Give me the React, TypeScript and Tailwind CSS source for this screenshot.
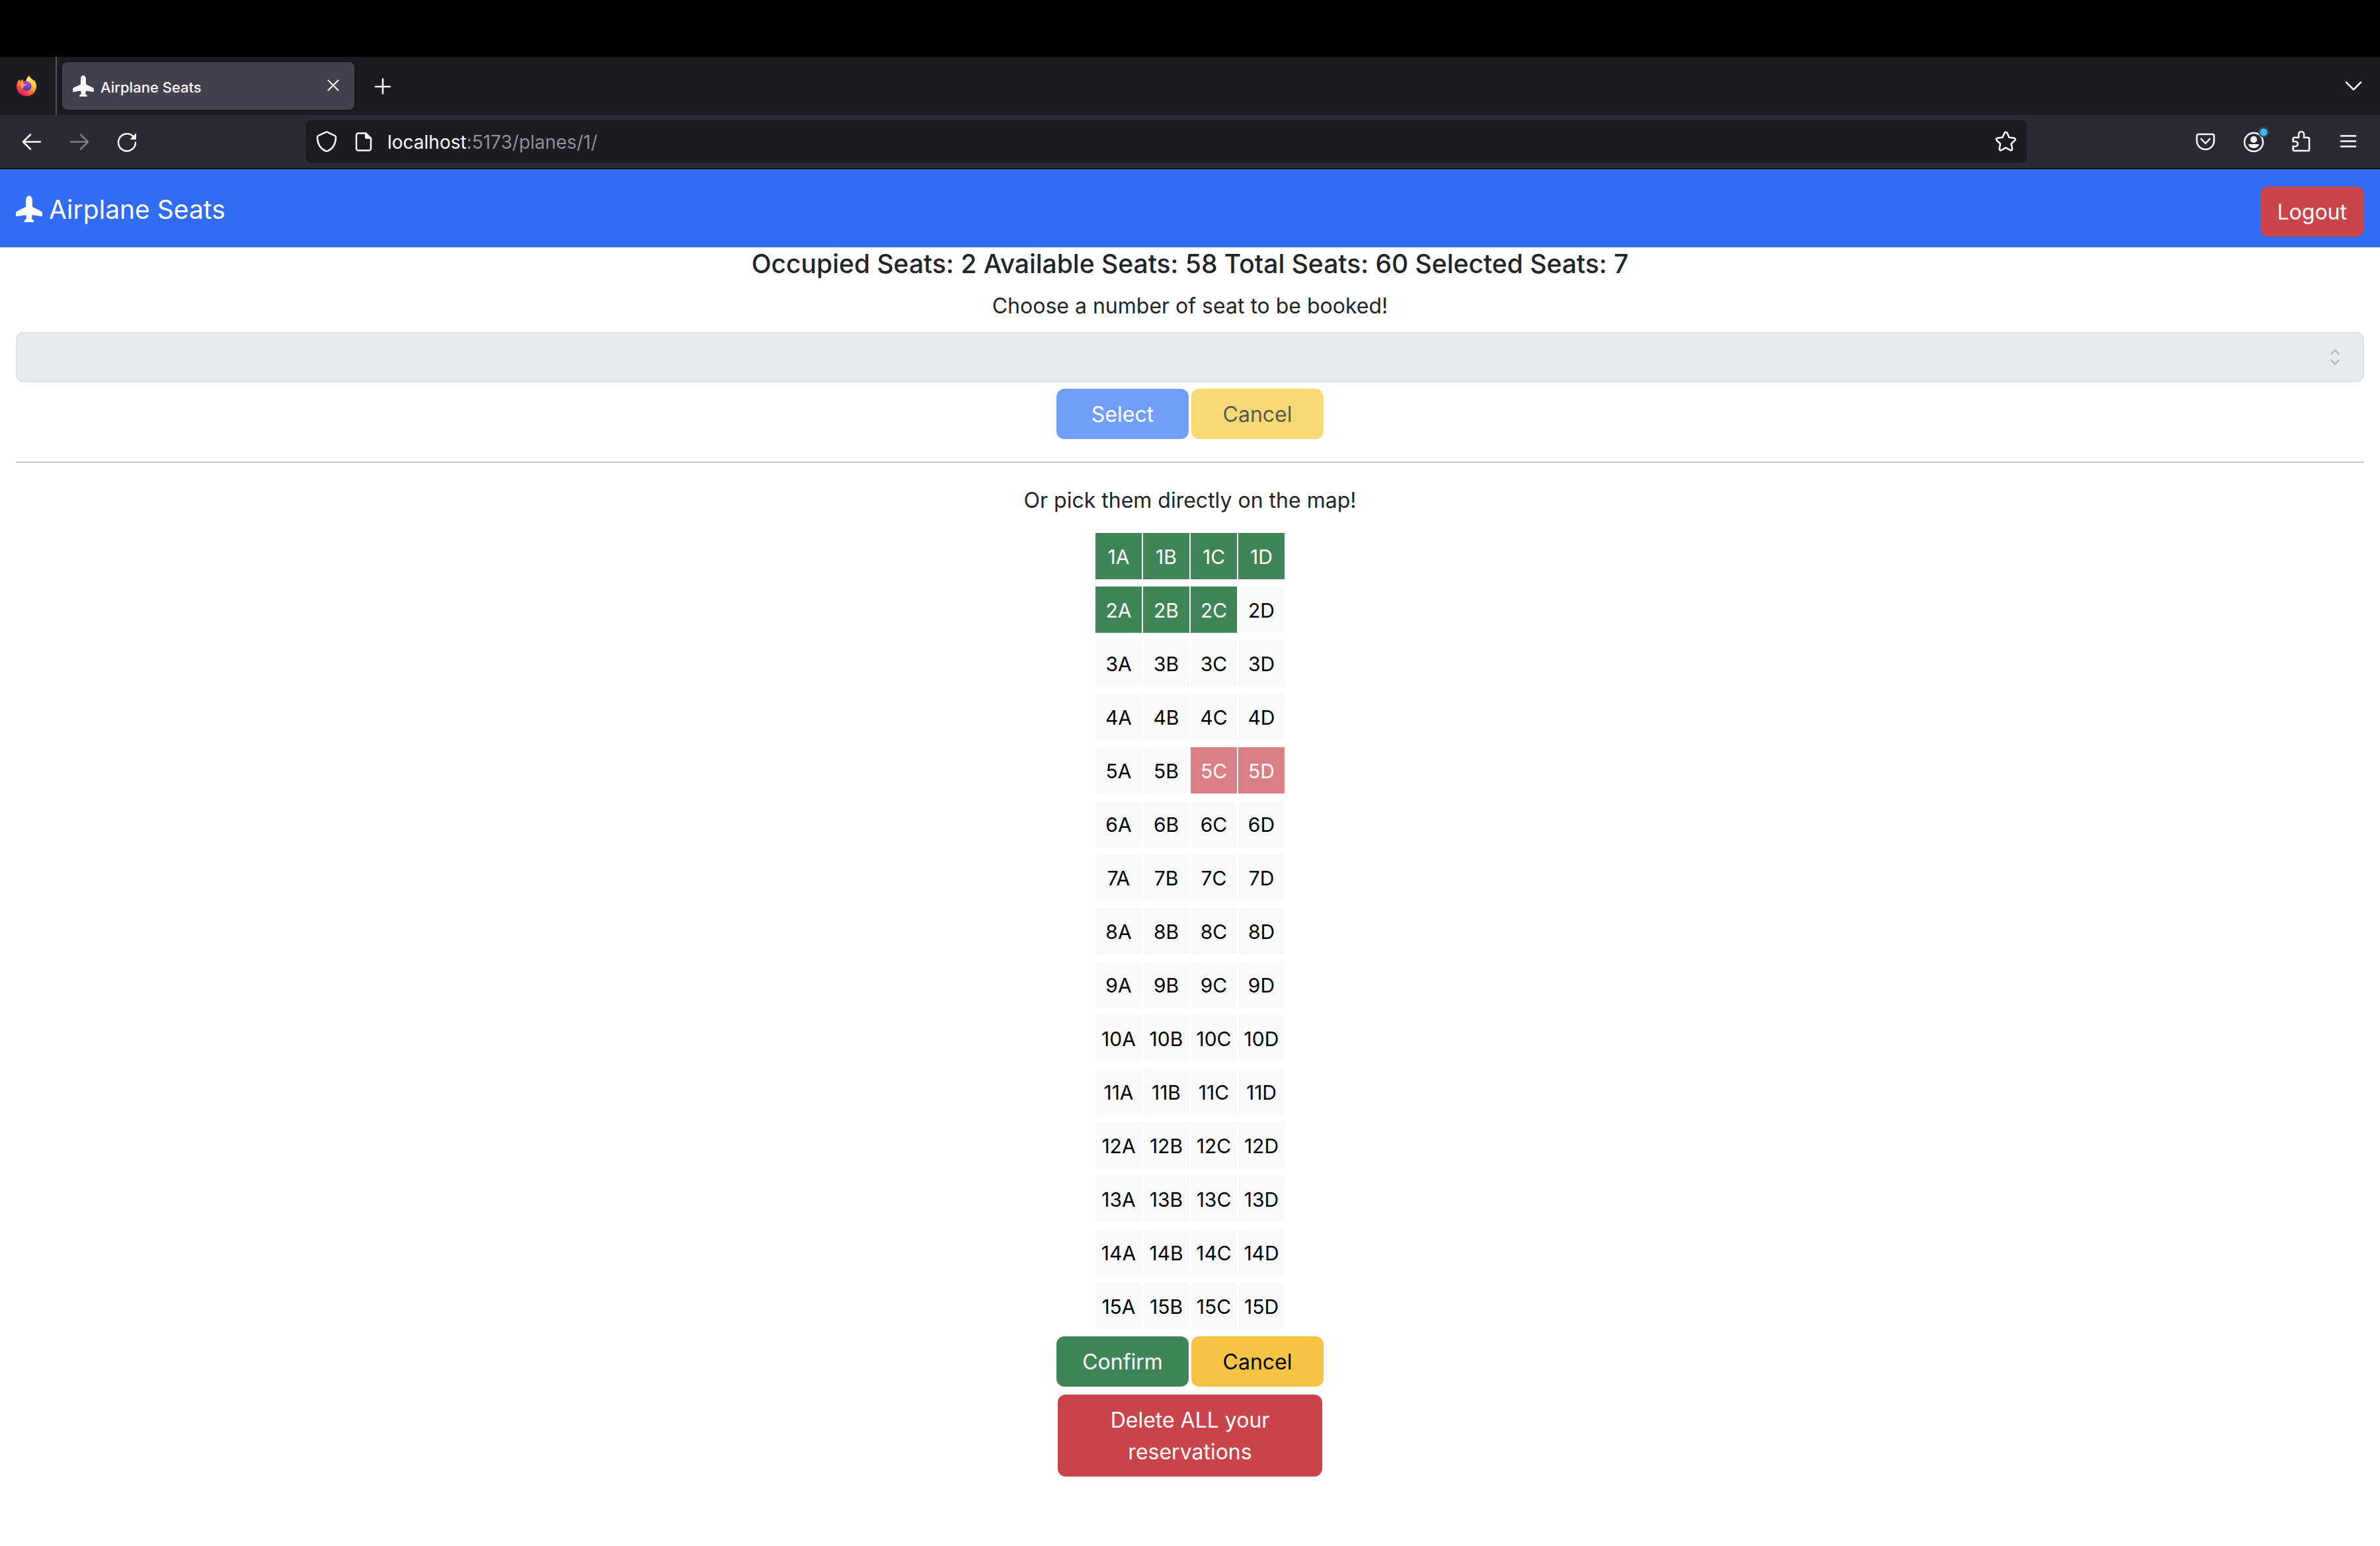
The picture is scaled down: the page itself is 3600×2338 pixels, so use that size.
import React from "react";

const columns = ["A", "B", "C", "D"];
const rows = Array.from({ length: 15 }, (_, i) => i + 1);
const selectedSeats = ["1A", "1B", "1C", "1D", "2A", "2B", "2C"];
const occupiedSeats = ["5C", "5D"];

function PlaneIcon({ className }: { className: string }) {
  return (
    <svg viewBox="0 0 16 16" fill="currentColor" className={className} aria-hidden="true">
      <path d="M6.428 1.151C6.708.591 7.213 0 8 0s1.292.592 1.572 1.151C9.861 1.73 10 2.431 10 3v3.691l5.17 2.585a1.5 1.5 0 0 1 .83 1.342V12a.5.5 0 0 1-.582.493l-5.507-.918-.375 2.253 1.318 1.318A.5.5 0 0 1 10.5 16h-5a.5.5 0 0 1-.354-.854l1.319-1.318-.376-2.253-5.507.918A.5.5 0 0 1 0 12v-1.382a1.5 1.5 0 0 1 .83-1.342L6 6.691V3c0-.568.14-1.271.428-1.849" />
    </svg>
  );
}

function FirefoxLogo() {
  return (
    <svg viewBox="0 0 32 32" className="size-8" aria-hidden="true">
      <defs>
        <linearGradient id="flame" x1="26" y1="4" x2="8" y2="30" gradientUnits="userSpaceOnUse">
          <stop offset="0" stopColor="#fff44f" />
          <stop offset="0.35" stopColor="#ffb22e" />
          <stop offset="0.62" stopColor="#ff6b36" />
          <stop offset="0.85" stopColor="#f0334f" />
          <stop offset="1" stopColor="#d01a77" />
        </linearGradient>
        <linearGradient id="crest" x1="20" y1="1" x2="26" y2="24" gradientUnits="userSpaceOnUse">
          <stop offset="0" stopColor="#fff36b" />
          <stop offset="0.6" stopColor="#ffcf3d" />
          <stop offset="1" stopColor="#ff9a2e" stopOpacity="0" />
        </linearGradient>
        <radialGradient id="globe" cx="18" cy="12" r="10" gradientUnits="userSpaceOnUse">
          <stop offset="0" stopColor="#a14be8" />
          <stop offset="0.6" stopColor="#7a3fd6" />
          <stop offset="1" stopColor="#4a3cae" />
        </radialGradient>
      </defs>
      <path
        fill="url(#flame)"
        d="M20.2.8c-3 2-4.200 4.900-4.500 7.700-1.500.1-2.900.5-4.200 1.200-.8-1-.9-2.600-.5-3.900-1.900.8-3.100 2-3.900 3.200-.8-.1-1.200-1.800-1-3.200C3.200 7.500 1 12.600 1 17c0 8.200 6.600 14.400 15 14.400S31 25.200 31 16.800c0-4.100-1.400-7.900-4-10.600.3 1.200.4 2.100.3 3C25.900 5.900 21.400 4.800 20.200.8z"
      />
      <circle cx="16.300" cy="16.300" r="7.200" fill="url(#globe)" />
      <path
        fill="url(#crest)"
        d="M20.200.8c-3 2-4.200 4.900-4.500 7.700 5.200-.2 9.300 3.700 9.100 8.600-.1 3-1.700 5.600-4.200 7 4.900-.1 8.900-4.500 8.200-10.600-.3-2.400-1-3.600-1.500-4.300C25.900 5.900 21.400 4.800 20.200.8z"
      />
      <path
        fill="#ff9640"
        d="M5.500 12.500c2.200-1.700 4.600-1.500 6.300-.2 1.300.8 3 .9 4.500 1-.2 1.500-2.300 2.200-3.800 2.900-1 .6-1.300 1.800-.7 3.200-2.500.2-5.600-2-6.300-6.900z"
      />
    </svg>
  );
}

const stroke = {
  fill: "none",
  stroke: "currentColor",
  strokeWidth: 2.5,
  strokeLinecap: "round" as const,
  strokeLinejoin: "round" as const,
  "aria-hidden": true,
};

function IconButton({ label, children, dim }: { label: string; children: React.ReactNode; dim?: boolean }) {
  return (
    <button
      type="button"
      aria-label={label}
      disabled={dim}
      className="flex size-16 items-center justify-center text-[#fbfbfe] disabled:text-[#7f7e84]"
    >
      {children}
    </button>
  );
}

function TabBar() {
  return (
    <div className="flex h-22 items-center bg-[#1c1b22] text-[#fbfbfe]">
      <div className="flex w-[86px] items-center self-stretch border-r-2 border-[#55545b] pl-6">
        <FirefoxLogo />
      </div>
      <div className="ml-2 flex h-18 w-[442px] items-center rounded-lg bg-[#42414d] pr-2 pl-4 shadow-[0_0_4px_rgba(0,0,0,0.5)]">
        <PlaneIcon className="size-8" />
        <span className="ml-[10px] flex-1 pt-[3px] text-[22px] leading-8 font-medium">Airplane Seats</span>
        <button type="button" aria-label="Close tab" className="flex size-12 items-center justify-center">
          <svg viewBox="0 0 32 32" className="size-8" {...stroke} strokeWidth={2}>
            <path d="M8.500 7.500l15 15M23.500 7.500l-15 15" />
          </svg>
        </button>
      </div>
      <button type="button" aria-label="New tab" className="ml-[11px] flex size-16 items-center justify-center">
        <svg viewBox="0 0 32 32" className="size-8" {...stroke}>
          <path d="M16 5.500v22M5 17h22" />
        </svg>
      </button>
      <button type="button" aria-label="List all tabs" className="mr-2 ml-auto flex size-16 items-center justify-center">
        <svg viewBox="0 0 32 32" className="size-8" {...stroke}>
          <path d="M5 10.500l11 11 11-11" />
        </svg>
      </button>
    </div>
  );
}

function Toolbar() {
  return (
    <div className="flex h-[82px] items-center border-b-2 border-[#0c0c0d] bg-[#2b2a33] text-[#fbfbfe]">
      <div className="flex w-[462px] gap-2 pl-4">
        <IconButton label="Back">
          <svg viewBox="0 0 32 32" className="size-8" {...stroke}>
            <path d="M29 16.500H3.500M14 5.500l-11 11 11 11" />
          </svg>
        </IconButton>
        <IconButton label="Forward" dim>
          <svg viewBox="0 0 32 32" className="size-8" {...stroke}>
            <path d="M3 16.500h25.500M18 5.500l11 11-11 11" />
          </svg>
        </IconButton>
        <IconButton label="Reload">
          <svg viewBox="0 0 32 32" className="size-8" {...stroke}>
            <path d="M29 17.500A13 13 0 1 1 25 8" />
            <path d="M30 3v10h-9.500z" fill="currentColor" stroke="none" />
          </svg>
        </IconButton>
      </div>
      <div className="flex h-16 flex-1 items-center rounded-lg bg-[#1c1b22] px-4">
        <svg viewBox="0 0 32 32" className="size-8" {...stroke}>
          <path d="M16 1.500c.5 0 .9.100 1.300.400l11 5.300c1.100.500 1.700 1.300 1.700 2.500-.2 10-4.500 17-12.500 20.700-.5.200-1 .300-1.500.300s-1-.100-1.500-.300C6.500 26.700 2.200 19.700 2 9.700c0-1.200.6-2 1.700-2.500l11-5.300c.4-.3.800-.4 1.300-.4z" />
        </svg>
        <svg viewBox="0 0 32 32" className="ml-6 size-8" {...stroke}>
          <path d="M19 3.500H8a3 3 0 0 0-3 3v20a3 3 0 0 0 3 3h16a3 3 0 0 0 3-3V11" />
          <path d="M18 2.300h2l8 8V12h-8a2 2 0 0 1-2-2z" fill="currentColor" stroke="none" />
        </svg>
        <div className="ml-5 flex-1 pt-[2px] text-[28px] leading-9 text-[#8f8f96]">
          <span className="text-[#fbfbfe]">localhost</span>:5173/planes/1/
        </div>
        <button type="button" aria-label="Bookmark this page">
          <svg viewBox="0 0 32 32" className="size-8" {...stroke}>
            <path d="M14.200 2.800c.8-1.500 2.800-1.500 3.600 0l3.200 7 7.600 1c1.700.3 2.300 2.100 1.200 3.400l-5.500 5.300 1.400 7.500c.3 1.700-1.300 2.900-2.900 2.100L16 25.400l-6.800 3.700c-1.600.8-3.200-.4-2.900-2.100l1.400-7.500-5.500-5.300c-1.100-1.300-.5-3.100 1.200-3.400l7.600-1z" />
          </svg>
        </button>
      </div>
      <div className="flex w-[534px] justify-end gap-2 pr-4">
        <IconButton label="Save to Pocket">
          <svg viewBox="0 0 32 32" className="size-8" {...stroke}>
            <path d="M5.500 5h21A2.500 2.500 0 0 1 29 7.500V15a13 13 0 0 1-26 0V7.500A2.500 2.500 0 0 1 5.500 5z" />
            <path d="M9.500 12l6.500 7 6.500-7" />
          </svg>
        </IconButton>
        <IconButton label="Account">
          <svg viewBox="0 0 32 32" className="size-8 overflow-visible" {...stroke}>
            <circle cx="17" cy="17" r="14" />
            <circle cx="17" cy="13" r="5" fill="currentColor" stroke="none" />
            <path d="M10.500 20h13c1.200 0 1.800 1 1.200 1.900C23 24.700 20.200 26 17 26s-6-1.300-7.700-4.100c-.6-.9 0-1.900 1.200-1.900z" fill="currentColor" stroke="none" />
            <circle cx="32" cy="2" r="8" fill="#2b5268" stroke="none" />
            <circle cx="32" cy="2" r="5.500" fill="#4eb0f5" stroke="none" />
          </svg>
        </IconButton>
        <IconButton label="Extensions">
          <svg viewBox="0 0 32 32" className="size-8" {...stroke}>
            <path d="M4.500 23v5a2 2 0 0 0 2 2H27a2 2 0 0 0 2-2V12a2 2 0 0 0-2-2h-6V5a4 4 0 0 0-8 0v5H6.500a2 2 0 0 0-2 2v4H8a3.700 3.700 0 0 1 0 7.400z" />
          </svg>
        </IconButton>
        <IconButton label="Open menu">
          <svg viewBox="0 0 32 32" className="size-8" {...stroke}>
            <path d="M5 7.500h22M5 15.500h22M5 23.500h22" />
          </svg>
        </IconButton>
      </div>
    </div>
  );
}

function seatColor(seat: string) {
  if (selectedSeats.includes(seat)) return "bg-[#408558] text-white";
  if (occupiedSeats.includes(seat)) return "bg-[#d97f85] text-white";
  return "bg-[#f8f9fb] text-black";
}

const actionButton = "h-[76px] w-[200px] rounded-xl pt-[2px] text-[32px] leading-[48px]";

export default function App() {
  return (
    <div className="min-h-screen bg-white font-['Inter',sans-serif] text-[32px] leading-[48px] text-[#212529]">
      <div className="h-[86px] bg-black" />
      <TabBar />
      <Toolbar />
      <nav className="flex h-[118px] items-start justify-between bg-[#316cf4] px-6 pt-[26px] text-white">
        <a href="#" className="flex items-center pt-[9px] text-[39px]">
          <PlaneIcon className="size-10" />
          <span className="ml-[10px] pt-[2px]">Airplane Seats</span>
        </a>
        <button type="button" className="h-[76px] rounded-xl bg-[#ca444b] px-[26px] pt-[2px]">
          Logout
        </button>
      </nav>
      <main className="px-6 text-center">
        <h1 className="pt-px text-[39px] leading-[48px] font-medium">
          Occupied Seats: 2 Available Seats: 58 Total Seats: 60 Selected Seats: 7
        </h1>
        <label htmlFor="seat-count" className="mt-4 mb-[15px] block">
          Choose a number of seat to be booked!
        </label>
        <div className="relative">
          <select
            id="seat-count"
            disabled
            className="block h-[76px] w-full appearance-none rounded-xl border-2 border-[#dee2e6] bg-[#e7ebee] px-6"
          />
          <svg viewBox="0 0 16 28" className="absolute top-6 right-9 h-7 w-4 text-[#b9bac3]" {...stroke} strokeWidth={3}>
            <path d="M2.500 9l5.500-5.500 5.500 5.500M2.500 19l5.500 5.500 5.500-5.500" />
          </svg>
        </div>
        <div className="mt-[10px] flex justify-center gap-1">
          <button type="button" disabled className={`${actionButton} bg-[#709ef8] text-white`}>
            Select
          </button>
          <button type="button" disabled className={`${actionButton} bg-[#f8d973] text-[#595959]`}>
            Cancel
          </button>
        </div>
        <hr className="mt-[34px] mb-[33px] border-t-2 border-[#c7c8c9]" />
        <p>Or pick them directly on the map!</p>
        <div className="mx-auto mt-[25px] grid w-fit grid-cols-4 gap-x-[2px] gap-y-[11px]">
          {rows.flatMap((row) =>
            columns.map((column) => {
              const seat = `${row}${column}`;
              return (
                <button
                  key={seat}
                  type="button"
                  disabled={occupiedSeats.includes(seat)}
                  className={`size-[70px] pt-[2px] text-[30px] ${seatColor(seat)}`}
                >
                  {seat}
                </button>
              );
            }),
          )}
        </div>
        <div className="mt-[11px] flex justify-center gap-1">
          <button type="button" className={`${actionButton} bg-[#408558] text-white`}>
            Confirm
          </button>
          <button type="button" className={`${actionButton} bg-[#f6c344] text-black`}>
            Cancel
          </button>
        </div>
        <button type="button" className="mt-3 w-[400px] rounded-xl bg-[#ca444b] px-7 pt-[15px] pb-[13px] text-white">
          Delete ALL your reservations
        </button>
      </main>
    </div>
  );
}
